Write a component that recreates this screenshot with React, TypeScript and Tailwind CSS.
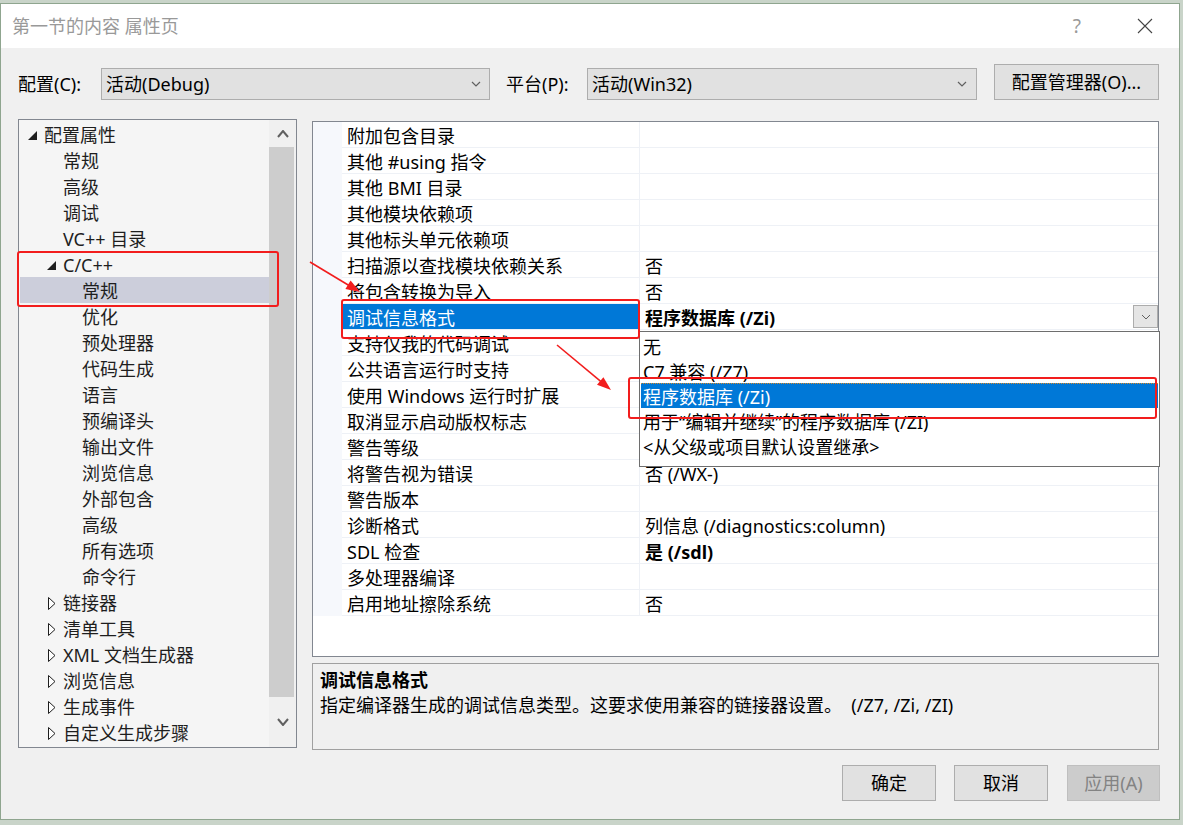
import React from 'react'

type TreeNode = { t: string; l: 0 | 1 | 2; i?: 'open' | 'closed'; sel?: boolean }

const tree: TreeNode[] = [
  { t: '配置属性', l: 0, i: 'open' },
  { t: '常规', l: 1 },
  { t: '高级', l: 1 },
  { t: '调试', l: 1 },
  { t: 'VC++ 目录', l: 1 },
  { t: 'C/C++', l: 1, i: 'open' },
  { t: '常规', l: 2, sel: true },
  { t: '优化', l: 2 },
  { t: '预处理器', l: 2 },
  { t: '代码生成', l: 2 },
  { t: '语言', l: 2 },
  { t: '预编译头', l: 2 },
  { t: '输出文件', l: 2 },
  { t: '浏览信息', l: 2 },
  { t: '外部包含', l: 2 },
  { t: '高级', l: 2 },
  { t: '所有选项', l: 2 },
  { t: '命令行', l: 2 },
  { t: '链接器', l: 1, i: 'closed' },
  { t: '清单工具', l: 1, i: 'closed' },
  { t: 'XML 文档生成器', l: 1, i: 'closed' },
  { t: '浏览信息', l: 1, i: 'closed' },
  { t: '生成事件', l: 1, i: 'closed' },
  { t: '自定义生成步骤', l: 1, i: 'closed' },
]

const levelPad = ['pl-[7px]', 'pl-[26px]', 'pl-[45px]']

type Row = { name: string; value?: string; bold?: boolean; sel?: boolean }

const rows: Row[] = [
  { name: '附加包含目录' },
  { name: '其他 #using 指令' },
  { name: '其他 BMI 目录' },
  { name: '其他模块依赖项' },
  { name: '其他标头单元依赖项' },
  { name: '扫描源以查找模块依赖关系', value: '否' },
  { name: '将包含转换为导入', value: '否' },
  { name: '调试信息格式', value: '程序数据库 (/Zi)', bold: true, sel: true },
  { name: '支持仅我的代码调试' },
  { name: '公共语言运行时支持' },
  { name: '使用 Windows 运行时扩展' },
  { name: '取消显示启动版权标志' },
  { name: '警告等级' },
  { name: '将警告视为错误', value: '否 (/WX-)' },
  { name: '警告版本' },
  { name: '诊断格式', value: '列信息 (/diagnostics:column)' },
  { name: 'SDL 检查', value: '是 (/sdl)', bold: true },
  { name: '多处理器编译' },
  { name: '启用地址擦除系统', value: '否' },
]

const options = ['无', 'C7 兼容 (/Z7)', '程序数据库 (/Zi)', '用于“编辑并继续”的程序数据库 (/ZI)', '<从父级或项目默认设置继承>']

function Chevron({ up = false, color = '#606060', w = 10, h = 6, sw = 1.2 }: { up?: boolean; color?: string; w?: number; h?: number; sw?: number }) {
  const pts = up ? `1,${h - 1} ${w / 2},1 ${w - 1},${h - 1}` : `1,1 ${w / 2},${h - 1} ${w - 1},1`
  return (
    <svg width={w} height={h} viewBox={`0 0 ${w} ${h}`}>
      <polyline points={pts} fill="none" stroke={color} strokeWidth={sw} />
    </svg>
  )
}

function TreeIcon({ kind }: { kind?: 'open' | 'closed' }) {
  if (kind === 'open')
    return (
      <svg width="9" height="9" viewBox="0 0 9 9" className="ml-[1px]">
        <polygon points="9,0 9,9 0,9" fill="#1e1e1e" />
      </svg>
    )
  if (kind === 'closed')
    return (
      <svg width="8" height="13" viewBox="0 0 8 13" className="ml-[2px]">
        <polygon points="0.5,0.5 7,6.5 0.5,12.5" fill="#fff" stroke="#1e1e1e" strokeWidth="1" />
      </svg>
    )
  return null
}

function Button({ children, disabled = false, w }: { children: React.ReactNode; disabled?: boolean; w: string }) {
  return (
    <div
      className={`${w} h-[36px] flex items-center justify-center border ${
        disabled ? 'bg-[#cccccc] border-[#bfbfbf] text-[#838383]' : 'bg-[#e1e1e1] border-[#adadad] text-black'
      }`}
    >
      {children}
    </div>
  )
}

export default function App() {
  return (
    <div className="relative w-[1183px] h-[825px] overflow-hidden bg-[#c9d4c9] font-['Noto_Sans','Noto_Sans_CJK_SC',sans-serif] text-[18px] leading-[24px] text-black">
      {/* dialog */}
      <div className="mt-[3px] w-[1180px] h-[817px] border border-[#8fa58f] bg-[#f0f0f0] flex flex-col">
        {/* title bar */}
        <div className="h-[44px] bg-white flex items-center pl-[11px] pr-[26px]">
          <span className="text-[#999999]">第一节的内容 属性页</span>
          <span className="ml-auto text-[#999999] text-[19px]">?</span>
          <svg width="16" height="16" viewBox="0 0 16 16" className="ml-[56px]">
            <path d="M1 1 L15 15 M15 1 L1 15" stroke="#444" strokeWidth="1.1" />
          </svg>
        </div>

        <div className="flex-1 flex flex-col pl-[17px] pr-[19px]">
          {/* config row */}
          <div className="mt-[16px] h-[36px] flex items-end">
            <div className="w-[83px] h-[32px] flex items-center">配置(C):</div>
            <div className="w-[389px] h-[32px] bg-[#e1e1e1] border border-[#adadad] flex items-center pl-[4px] pr-[8px]">
              <span>活动(Debug)</span>
              <span className="ml-auto">
                <Chevron w={10} h={6} />
              </span>
            </div>
            <div className="ml-[16px] w-[81px] h-[32px] flex items-center">平台(P):</div>
            <div className="w-[390px] h-[32px] bg-[#e1e1e1] border border-[#adadad] flex items-center pl-[4px] pr-[9px]">
              <span>活动(Win32)</span>
              <span className="ml-auto">
                <Chevron w={10} h={6} />
              </span>
            </div>
            <div className="ml-[17px]">
              <Button w="w-[165px]">配置管理器(O)...</Button>
            </div>
          </div>

          {/* main area */}
          <div className="mt-[19px] flex">
            {/* tree */}
            <div className="w-[279px] h-[629px] border border-[#828790] bg-[#f5f5f5] flex">
              <div className="flex-1 pt-[1px] pl-[1px]">
                {tree.map((n, idx) => (
                  <div
                    key={idx}
                    className={`h-[26px] pt-[2px] flex items-center ${levelPad[n.l]} ${n.sel ? 'bg-[#cccedb]' : ''} text-[#1e1e1e]`}
                  >
                    <div className="w-[17px] flex items-center">
                      <TreeIcon kind={n.i} />
                    </div>
                    <span className="whitespace-nowrap">{n.t}</span>
                  </div>
                ))}
              </div>
              <div className="w-[27px] bg-[#f0f0f0] flex flex-col">
                <div className="h-[27px] flex items-center justify-center">
                  <Chevron up w={12} h={8} sw={2} />
                </div>
                <div className="h-[550px] bg-[#cdcdcd] mr-[2px]" />
                <div className="flex-1 flex items-center justify-center">
                  <Chevron w={12} h={8} sw={2} />
                </div>
              </div>
            </div>

            {/* right column */}
            <div className="ml-[15px] w-[847px] flex flex-col">
              <div className="relative mt-[2px] h-[536px] border border-[#828790] bg-white">
                {rows.map((r, idx) => (
                  <div key={idx} className="h-[26px] flex">
                    <div className="w-[29px] bg-[#f6f8fc]" />
                    <div
                      className={`w-[298px] flex items-center pl-[5px] pt-[2px] border-b border-r border-[#eef1f6] whitespace-nowrap ${
                        r.sel ? 'bg-[#0078d7] text-white' : ''
                      }`}
                    >
                      {r.name}
                    </div>
                    <div className={`relative flex-1 flex items-center pl-[5px] pt-[2px] border-b border-[#eef1f6] whitespace-nowrap ${r.bold ? 'font-bold' : ''}`}>
                      {r.value}
                      {r.sel && (
                        <div className="absolute right-0 top-[1px] w-[25px] h-[23px] bg-[#e5e5e5] border border-[#acacac] flex items-center justify-center">
                          <Chevron w={10} h={6} sw={1} />
                        </div>
                      )}
                    </div>
                  </div>
                ))}

                {/* open drop-down list */}
                <div className="absolute left-[326px] top-[209px] w-[521px] h-[136px] bg-white border border-[#6e6e6e] p-[1px]">
                  {options.map((o, idx) => (
                    <div
                      key={idx}
                      className={`h-[25px] pt-[2px] flex items-center pl-[2px] whitespace-nowrap ${
                        idx === 2 ? 'bg-[#0078d7] text-white border-t border-dotted border-[#d88a2a]' : ''
                      }`}
                    >
                      {o}
                    </div>
                  ))}
                </div>
              </div>

              {/* description */}
              <div className="mt-[6px] h-[87px] border border-[#a0a0a0] bg-[#f0f0f0] pl-[7px] pt-[4px] leading-[25px]">
                <div className="font-bold">调试信息格式</div>
                <div className="whitespace-pre">指定编译器生成的调试信息类型。这要求使用兼容的链接器设置。  (/Z7, /Zi, /ZI)</div>
              </div>
            </div>
          </div>

          {/* buttons */}
          <div className="mt-[15px] flex justify-end">
            <Button w="w-[94px]">确定</Button>
            <div className="ml-[18px]">
              <Button w="w-[94px]">取消</Button>
            </div>
            <div className="ml-[19px]">
              <Button w="w-[93px]" disabled>
                应用(A)
              </Button>
            </div>
          </div>
        </div>
      </div>

      {/* red annotation boxes */}
      <div className="absolute left-[17px] top-[251px] w-[262px] h-[56px] border-2 border-[#f21d1d] rounded-[3px]" />
      <div className="absolute left-[341px] top-[299px] w-[299px] h-[40px] border-2 border-[#f21d1d] rounded-[3px]" />
      <div className="absolute left-[628px] top-[377px] w-[529px] h-[42px] border-2 border-[#f21d1d] rounded-[3px]" />

      {/* red arrows */}
      <svg className="absolute left-0 top-0 pointer-events-none" width="1183" height="825">
        <line x1="310" y1="262" x2="349" y2="285.5" stroke="#f21d1d" strokeWidth="1.6" />
        <polygon points="360,292 345.4,289.1 350.6,280.5" fill="#f21d1d" />
        <line x1="557" y1="345" x2="601" y2="381.6" stroke="#f21d1d" strokeWidth="1.6" />
        <polygon points="611,390 597,384.8 603.4,377.2" fill="#f21d1d" />
      </svg>
    </div>
  )
}
